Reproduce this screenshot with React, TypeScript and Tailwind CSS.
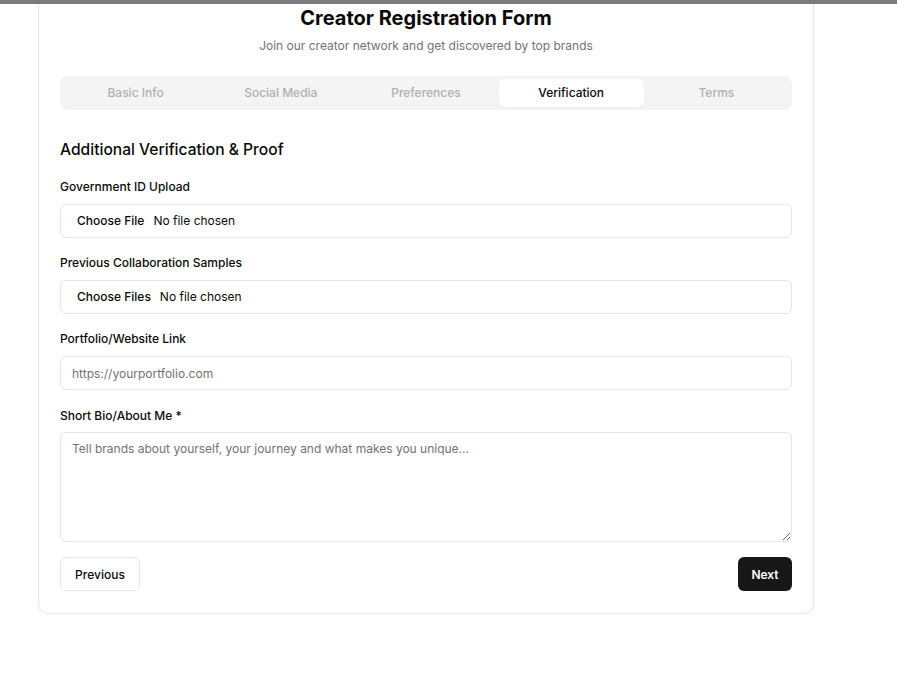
import React from "react";

const tabs = ["Basic Info", "Social Media", "Preferences", "Verification", "Terms"];

function FileField({ label }: { label: string }) {
  return (
    <div className="flex h-[34px] w-full items-center rounded-md border border-[#e5e5e5] bg-white px-3 text-[12px] text-[#0a0a0a]">
      <span className="px-1 font-medium">{label}</span>
      <span className="ml-[5px]">No file chosen</span>
    </div>
  );
}

function Label({ children }: { children: React.ReactNode }) {
  return <div className="h-5 text-[12px] font-medium leading-5 text-[#0a0a0a]">{children}</div>;
}

export default function App() {
  return (
    <div className="min-h-[688px] bg-white" style={{ fontFamily: "Inter, 'Noto Sans', sans-serif" }}>
      <div className="h-[4px] w-full bg-[#7b7b7b]" />
      <div className="ml-[38px] w-[776px] rounded-b-[10px] border-x border-b border-[#e5e5e5] bg-white px-[21px] pb-[22px]">
        <h1 className="text-center text-[20px] font-bold leading-[28px] text-[#0a0a0a]">
          Creator Registration Form
        </h1>
        <p className="mt-1 text-center text-[12px] leading-5 text-[#737373]">
          Join our creator network and get discovered by top brands
        </p>
        <div className="mt-5 grid h-[34px] grid-cols-5 rounded-lg bg-[#f4f4f4] p-[3px]">
          {tabs.map((t) => (
            <div
              key={t}
              className={
                t === "Verification"
                  ? "flex items-center justify-center rounded-md bg-white text-[12px] font-medium text-[#0a0a0a] shadow-[0_1px_2px_rgba(0,0,0,0.04)]"
                  : "flex items-center justify-center text-[12px] font-medium text-[#b0b0b0]"
              }
            >
              {t}
            </div>
          ))}
        </div>

        <h2 className="mt-[26px] text-[15.6px] font-medium leading-7 text-[#0a0a0a]">
          Additional Verification &amp; Proof
        </h2>

        <div className="mt-[13px] flex flex-col">
          <Label>Government ID Upload</Label>
          <div className="mt-[7px]">
            <FileField label="Choose File" />
          </div>

          <div className="mt-[15px]">
            <Label>Previous Collaboration Samples</Label>
          </div>
          <div className="mt-[7px]">
            <FileField label="Choose Files" />
          </div>

          <div className="mt-[15px]">
            <Label>Portfolio/Website Link</Label>
          </div>
          <input
            type="text"
            placeholder="https://yourportfolio.com"
            className="mt-[7px] h-[34px] w-full rounded-md border border-[#e5e5e5] bg-white px-[11px] text-[12px] text-[#0a0a0a] placeholder:text-[#737373] outline-none"
          />

          <div className="mt-[16px]">
            <Label>Short Bio/About Me *</Label>
          </div>
          <textarea
            placeholder="Tell brands about yourself, your journey and what makes you unique..."
            className="mt-[6px] h-[110px] w-full rounded-md border border-[#e5e5e5] bg-white px-[11px] py-[6px] text-[12px] leading-5 text-[#0a0a0a] placeholder:text-[#737373] outline-none"
          />
        </div>

        <div className="mt-[15px] flex items-center justify-between">
          <button className="h-[34px] w-[80px] rounded-md border border-[#e5e5e5] bg-white pt-px text-[12px] font-medium text-[#0a0a0a]">
            Previous
          </button>
          <button className="h-[34px] w-[54px] rounded-md bg-[#171717] pt-px text-[12px] font-semibold text-white">
            Next
          </button>
        </div>
      </div>
    </div>
  );
}
